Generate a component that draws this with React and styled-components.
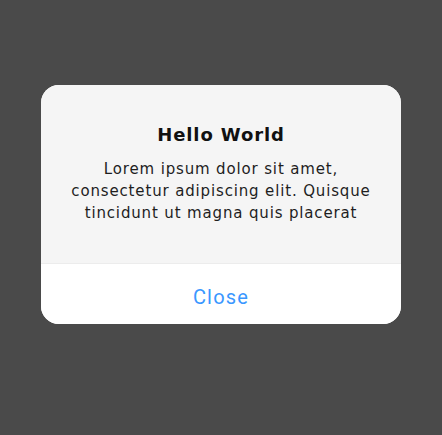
import styled, { createGlobalStyle } from 'styled-components';

const Global = createGlobalStyle`
  html, body {
    margin: 0;
    padding: 0;
    background: #4a4a4a;
  }
  body {
    font-family: "DejaVu Sans", Roboto, sans-serif;
  }
`;

const Screen = styled.div`
  width: 442px;
  height: 435px;
  display: flex;
  justify-content: center;
  padding-top: 85px;
  box-sizing: border-box;
`;

const Dialog = styled.div`
  width: 360px;
  height: 239px;
  border-radius: 18px;
  overflow: hidden;
  display: flex;
  flex-direction: column;
  background: #fff;
`;

const Content = styled.div`
  background: #f5f5f5;
  height: 179px;
  box-sizing: border-box;
  padding-top: 38px;
  text-align: center;
  border-bottom: 1px solid #ececec;
`;

const Title = styled.h2`
  margin: 0 0 11px;
  font-family: "DejaVu Sans", sans-serif;
  font-size: 18px;
  font-weight: 700;
  letter-spacing: 0.9px;
  color: #111;
  line-height: 24px;
`;

const Message = styled.p`
  margin: 0;
  font-size: 15px;
  line-height: 22px;
  letter-spacing: 0.85px;
  color: #1e1e1e;
  white-space: nowrap;
`;

const Action = styled.button`
  flex: 1;
  border: none;
  background: #fff;
  font-family: Roboto, sans-serif;
  font-size: 20px;
  letter-spacing: 1.2px;
  color: #3a97ff;
  padding: 6px 0 0;
  cursor: pointer;
`;

export default function App() {
  return (
    <>
      <Global />
      <Screen>
        <Dialog>
          <Content>
            <Title>Hello World</Title>
            <Message>
              Lorem ipsum dolor sit amet,
              <br />
              consectetur adipiscing elit. Quisque
              <br />
              tincidunt ut magna quis placerat
            </Message>
          </Content>
          <Action>Close</Action>
        </Dialog>
      </Screen>
    </>
  );
}
